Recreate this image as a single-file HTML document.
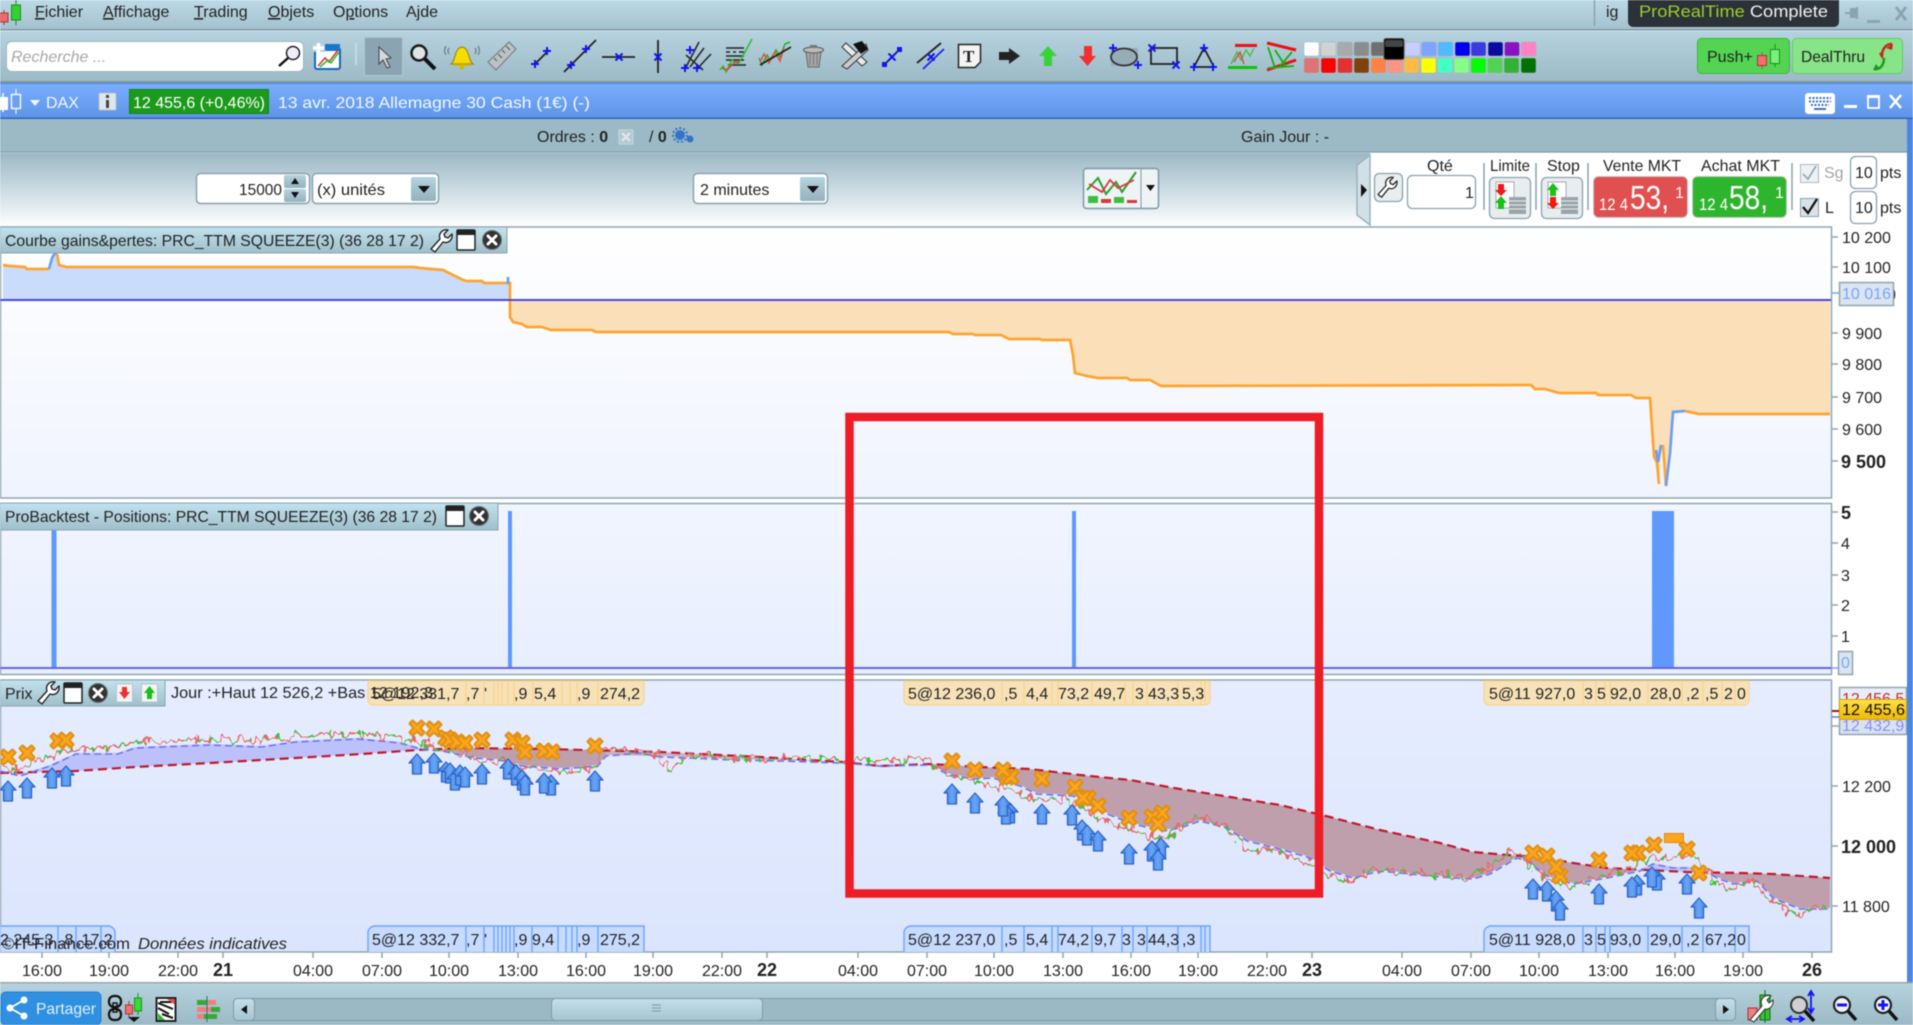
<!DOCTYPE html>
<html><head><meta charset="utf-8"><title>ProRealTime</title>
<style>
html,body{margin:0;padding:0;background:#fff;width:1913px;height:1025px;overflow:hidden}
svg{display:block;filter:blur(.6px)}
text{font-family:"Liberation Sans",sans-serif;font-size:16px;fill:#222}
.b{font-weight:bold}
.w{fill:#f2f7ff}
</style></head><body>
<svg width="1913" height="1025" viewBox="0 0 1913 1025" xmlns="http://www.w3.org/2000/svg">
<defs>
<linearGradient id="gMenu" x1="0" y1="0" x2="0" y2="1"><stop offset="0" stop-color="#bcd9e5"/><stop offset="1" stop-color="#a4c2ce"/></linearGradient>
<linearGradient id="gTool" x1="0" y1="0" x2="0" y2="1"><stop offset="0" stop-color="#b5d2de"/><stop offset="1" stop-color="#9cbac6"/></linearGradient>
<linearGradient id="gBlue" x1="0" y1="0" x2="0" y2="1"><stop offset="0" stop-color="#7baeff"/><stop offset="1" stop-color="#5d94e6"/></linearGradient>
<linearGradient id="gPanel" x1="0" y1="0" x2="0" y2="1"><stop offset="0" stop-color="#9db9c5"/><stop offset=".45" stop-color="#c6d8e0"/><stop offset="1" stop-color="#ffffff"/></linearGradient>
<linearGradient id="gTab" x1="0" y1="0" x2="0" y2="1"><stop offset="0" stop-color="#c2e2ee"/><stop offset="1" stop-color="#9fbfcb"/></linearGradient>
<linearGradient id="gC1" x1="0" y1="0" x2="0" y2="1"><stop offset="0" stop-color="#ffffff"/><stop offset="1" stop-color="#f0f4fe"/></linearGradient>
<linearGradient id="gC2" x1="0" y1="0" x2="0" y2="1"><stop offset="0" stop-color="#f1f5ff"/><stop offset="1" stop-color="#e7eefe"/></linearGradient>
<linearGradient id="gC3" x1="0" y1="0" x2="0" y2="1"><stop offset="0" stop-color="#e6edff"/><stop offset="1" stop-color="#dbe5fd"/></linearGradient>
<linearGradient id="gBtn" x1="0" y1="0" x2="0" y2="1"><stop offset="0" stop-color="#b6d3de"/><stop offset="1" stop-color="#93b2bf"/></linearGradient>
<linearGradient id="gYel" x1="0" y1="0" x2="0" y2="1"><stop offset="0" stop-color="#ffe04a"/><stop offset="1" stop-color="#f0b800"/></linearGradient>
<linearGradient id="gArr" x1="0" y1="0" x2="1" y2="0"><stop offset="0" stop-color="#3a7ee4"/><stop offset=".5" stop-color="#6aa6f6"/><stop offset="1" stop-color="#3a7ee4"/></linearGradient>
<linearGradient id="gThumb" x1="0" y1="0" x2="0" y2="1"><stop offset="0" stop-color="#c4dfe9"/><stop offset="1" stop-color="#a6c5d1"/></linearGradient>
<filter id="jit" filterUnits="userSpaceOnUse" x="0" y="700" width="1835" height="250">
<feTurbulence type="fractalNoise" baseFrequency="0.16 0.09" numOctaves="2" seed="7" result="n"/>
<feDisplacementMap in="SourceGraphic" in2="n" scale="18" xChannelSelector="G" yChannelSelector="R"/>
</filter>
<g id="x"><path d="M-4.500-7.500 0-3.500 4.500-7.500 7.500-4.500 3.500 0 7.500 4.500 4.500 7.500 0 3.500-4.500 7.500-7.500 4.500-3.500 0-7.500-4.500Z" fill="#ffa51c" stroke="#e09216" stroke-width="2.200" stroke-linejoin="round"/></g>
<g id="a"><path d="M0-10 8-1 4.500-1 4.500 10-4.500 10-4.500-1-8-1Z" fill="url(#gArr)" stroke="#2d63c4" stroke-width="1.300" stroke-linejoin="round"/></g>
<g id="cl"><circle r="9.500" fill="#333"/><circle r="9.500" fill="none" stroke="#777" stroke-width="1"/><path d="M-4-4 4 4M4-4-4 4" stroke="#fff" stroke-width="3" stroke-linecap="round"/></g>
<g id="win"><rect x="-9" y="-10" width="18" height="20" rx="1" fill="#fff" stroke="#222" stroke-width="1.500"/><rect x="-9" y="-10" width="18" height="5" fill="#222"/></g>
<path id="wr" d="M0 20 9 10C7 5 11 0 17 1L13 5 14 8 17 9 21 5C22 11 17 15 12 13L4 23Z" fill="#fff" stroke="#222" stroke-width="1.400" stroke-linejoin="round"/>
<path id="p" d="M-4 0H4M0-4V4" stroke="#1414f0" stroke-width="2" fill="none"/>
<path id="m" d="M-3.500-3.500 3.500 3.500M3.500-3.500-3.500 3.500" stroke="#1414f0" stroke-width="2" fill="none"/>
</defs>

<rect width="1913" height="1025" fill="#fff"/>

<!-- MENU -->
<rect x="0" y="0" width="1913" height="29" fill="url(#gMenu)"/>
<rect x="0" y="29" width="1913" height="1.500" fill="#7f99a5"/>
<rect x="0" y="30.500" width="1913" height="1" fill="#d5e8ef"/>
<line x1="4" y1="10" x2="4" y2="25" stroke="#a33"/><rect x="0" y="13" width="8" height="9" fill="#ee6a6a" stroke="#a33"/>
<line x1="16" y1="0" x2="16" y2="25" stroke="#1a8f1a"/><rect x="11.500" y="5" width="9" height="15" fill="#34d034" stroke="#1a8f1a"/>
<text x="35" y="17"><tspan text-decoration="underline">F</tspan>ichier</text>
<text x="103" y="17"><tspan text-decoration="underline">A</tspan>ffichage</text>
<text x="194" y="17"><tspan text-decoration="underline">T</tspan>rading</text>
<text x="268" y="17"><tspan text-decoration="underline">O</tspan>bjets</text>
<text x="333" y="17">O<tspan text-decoration="underline">p</tspan>tions</text>
<text x="406" y="17">A<tspan text-decoration="underline">j</tspan>de</text>
<line x1="1594.500" y1="0" x2="1594.500" y2="26" stroke="#8aa2ad" stroke-width="1.500"/>
<text x="1606" y="17">ig</text>
<path d="M1628 0H1839V22a5 5 0 0 1-5 5H1633a5 5 0 0 1-5-5Z" fill="#2c3239"/>
<text x="1639" y="17" textLength="189" lengthAdjust="spacingAndGlyphs" style="font-size:17px"><tspan style="fill:#9ccd2a">ProRealTime</tspan><tspan style="fill:#f2f2f2"> Complete</tspan></text>
<path d="M1845 12h5v-4h6v10h-6v-4h-5Z" fill="#8aa5b0"/><rect x="1856" y="7" width="2" height="12" fill="#8aa5b0"/>
<rect x="1867" y="20" width="13" height="3" fill="#8aa5b0"/>
<path d="M1896 7 1906 20M1906 7 1896 20" stroke="#8aa5b0" stroke-width="3"/>

<!-- TOOLBAR -->
<rect x="0" y="31.500" width="1913" height="50" fill="url(#gTool)"/>
<rect x="0" y="81" width="1913" height="2" fill="#7d97a3"/>
<rect x="6.500" y="41.500" width="297" height="30" rx="5" fill="#fff" stroke="#9fb5bf"/>
<text x="11" y="62" style="font-style:italic;fill:#a8a8a8">Recherche ...</text>
<circle cx="293" cy="53" r="6.500" fill="#eef" stroke="#222" stroke-width="1.500"/><line x1="288" y1="58" x2="279" y2="66" stroke="#111" stroke-width="2.500"/>
<g><rect x="315" y="48" width="25" height="21" rx="2" fill="#fff" stroke="#1266b8" stroke-width="2"/><rect x="315" y="44" width="25" height="7" fill="#1a76cc"/><rect x="313" y="44" width="12" height="8" fill="#b5d2de"/><path d="M313 48h11M318.500 43v10" stroke="#fff" stroke-width="3.500"/><path d="M318 66 325 58 329 62 338 50" fill="none" stroke="#e03030" stroke-width="1.500"/><path d="M320 67 328 60 331 63 339 52" fill="none" stroke="#27c027" stroke-width="1.500"/></g>
<line x1="356" y1="43" x2="356" y2="65" stroke="#c4dae3" stroke-width="2"/>
<rect x="364.500" y="37.500" width="38" height="38" fill="#8ba4b1" stroke="#aec6d0"/>
<path d="M379 47 379 64 383 60 387 68 390 67 386 59 391 58Z" fill="#cfd9de" stroke="#444"/>
<circle cx="419" cy="53" r="7.500" fill="#dfe4e8" stroke="#1a1a1a" stroke-width="2.500"/><line x1="425" y1="59" x2="435" y2="69" stroke="#111" stroke-width="4"/>
<path d="M451 64C456 61 454 48 462 47C470 48 468 61 473 64Z" fill="#f6dc00" stroke="#8a7e20"/><rect x="453" y="63" width="18" height="2.500" fill="#c9a800"/><circle cx="462" cy="67" r="2.500" fill="#d8b800"/><path d="M449 48q-2 3 0 6M446 46q-3 5 0 9M475 48q2 3 0 6M478 46q3 5 0 9" stroke="#6c8088" stroke-width="1.300" fill="none"/>
<path d="M488 62 509 42 516 49 496 70Z" fill="#bcc2c4" stroke="#777"/><path d="M494 58l3 3M498 54l4 4M502 50l3 3M506 46l4 4" stroke="#555"/>
<line x1="535" y1="64" x2="549" y2="50" stroke="#222" stroke-width="1.800"/><use href="#p" x="535" y="64"/><use href="#p" x="547" y="51"/>
<line x1="564" y1="72" x2="596" y2="40" stroke="#222" stroke-width="1.800"/><use href="#p" x="571" y="65"/><use href="#p" x="586" y="49"/>
<line x1="602" y1="57" x2="635" y2="57" stroke="#222" stroke-width="1.800"/><use href="#m" x="619" y="57"/>
<line x1="658" y1="40" x2="658" y2="73" stroke="#222" stroke-width="1.800"/><use href="#m" x="658" y="57"/>
<path d="M685 69 699 42M686 55 703 70M697 69 711 54M690 67 704 48" stroke="#2a2a2a" stroke-width="1.600" fill="none"/><use href="#p" x="690" y="50"/><use href="#p" x="685" y="68"/><use href="#p" x="697" y="68"/>
<path d="M726 48h18M726 52h4M733 52h3M739 52h5M726 56h18M726 60h18M728 65h18" stroke="#222" stroke-width="1.500" fill="none"/><path d="M720 70 723 66 726 72 732 60 738 64 745 52 752 39" stroke="#27c027" stroke-width="1.500" fill="none"/><path d="M722 68 727 70 735 62 740 62" stroke="#e04040" stroke-width="1.500" fill="none"/>
<path d="M759 58 762 65 767 55 770 60 776 50 780 57 785 44 790 42" stroke="#27b027" stroke-width="1.500" fill="none"/><path d="M760 62 764 54 769 63 775 52 780 61 784 48" stroke="#e05050" stroke-width="1.500" fill="none"/><line x1="760" y1="65" x2="791" y2="47" stroke="#222" stroke-width="1.800"/>
<path d="M806 52h15l-2 15h-11Z" fill="#a7a7a7" stroke="#666"/><ellipse cx="813.500" cy="50" rx="10" ry="3" fill="#bbb" stroke="#555"/><rect x="810" y="45" width="7" height="3" fill="#777"/><path d="M810 54v11M813.500 54v11M817 54v11" stroke="#777"/>
<path d="M841 47 861 66 866 62 845 43Z" fill="#e8eaec" stroke="#333" transform="translate(1 0)"/><path d="M866 44 842 66 847 69 868 50Z" fill="#ccc" stroke="#333"/><path d="M853 44 862 41 868 49 861 54Z" fill="#111"/>
<line x1="884" y1="65" x2="900" y2="49" stroke="#222" stroke-width="1.800"/><rect x="882" y="62" width="5" height="5" fill="#1414f0"/><rect x="897" y="47" width="5" height="5" fill="#1414f0"/><use href="#m" x="892" y="57"/>
<path d="M917 63 941 43" stroke="#222" stroke-width="1.800"/><path d="M923 69 944 49" stroke="#2222f0" stroke-width="1.800"/><use href="#m" x="931" y="57"/>
<path d="M958.500 44.500H980.500V62L975 67.500H958.500Z" fill="#f4f4f4" stroke="#222" stroke-width="1.500"/><text x="963" y="62" style="font-family:'Liberation Serif',serif;font-size:17px;font-weight:bold">T</text>
<path d="M999 52H1009V48L1020 56 1009 64V60H999Z" fill="#222"/>
<path d="M1048 46 1057 56H1052V66H1044V56H1039Z" fill="#36d436"/>
<path d="M1084 46H1092V56H1096L1087.500 66 1079 56H1084Z" fill="#f23030"/>
<rect x="1111" y="48" width="27" height="18" fill="#96adb8"/><ellipse cx="1124" cy="57" rx="13" ry="8.500" fill="none" stroke="#333" stroke-width="1.800"/><use href="#p" x="1113" y="48"/><use href="#p" x="1138" y="65"/>
<rect x="1151" y="48" width="26" height="16" fill="none" stroke="#222" stroke-width="1.800"/><use href="#m" x="1152" y="48"/><use href="#m" x="1176" y="65"/>
<path d="M1204 48 1194 67H1214Z" fill="none" stroke="#222" stroke-width="1.800"/><use href="#p" x="1204" y="48"/><use href="#p" x="1194" y="67"/><use href="#p" x="1213" y="67"/>
<rect x="1235" y="44" width="22" height="3" fill="#f01010"/><rect x="1228" y="66" width="29" height="3" fill="#10c010"/><path d="M1231 64 1237 52 1241 60 1246 50 1250 56 1254 48" fill="none" stroke="#3cc03c" stroke-width="1.300"/><path d="M1234 62 1240 52 1244 64" fill="none" stroke="#e04040" stroke-width="1.300"/>
<path d="M1267 43 1296 50M1267 70 1296 60" stroke="#ef1010" stroke-width="3"/><path d="M1268 68 1294 66M1268 47 1275 68M1275 50 1286 67M1292 52 1280 66" stroke="#12b012" stroke-width="1.800" fill="none"/>
<!-- swatches -->
<g stroke="#9db3bd" stroke-width=".5">
<rect x="1304" y="42" width="15" height="14" rx="2" fill="#fff"/><rect x="1321" y="42" width="15" height="14" rx="2" fill="#d2d2d2"/><rect x="1337.500" y="42" width="15" height="14" rx="2" fill="#a9a9a9"/><rect x="1354" y="42" width="15" height="14" rx="2" fill="#8c8c8c"/><rect x="1371" y="42" width="15" height="14" rx="2" fill="#707070"/>
<rect x="1405" y="42" width="15" height="14" rx="2" fill="#c6ceff"/><rect x="1421.500" y="42" width="15" height="14" rx="2" fill="#7ea4ff"/><rect x="1438" y="42" width="15" height="14" rx="2" fill="#4fbaff"/><rect x="1455" y="42" width="15" height="14" rx="2" fill="#0000ee"/><rect x="1471" y="42" width="15" height="14" rx="2" fill="#3a3ae0"/><rect x="1488" y="42" width="15" height="14" rx="2" fill="#0a0aa0"/><rect x="1504.500" y="42" width="15" height="14" rx="2" fill="#8a12c2"/><rect x="1521" y="42" width="15" height="14" rx="2" fill="#ff82c4"/>
<rect x="1304" y="58" width="15" height="15" rx="2" fill="#e27272"/><rect x="1321" y="58" width="15" height="15" rx="2" fill="#ff0000"/><rect x="1337.500" y="58" width="15" height="15" rx="2" fill="#e33232"/><rect x="1354" y="58" width="15" height="15" rx="2" fill="#80420c"/><rect x="1371" y="58" width="15" height="15" rx="2" fill="#ff8244"/><rect x="1387.500" y="58" width="15" height="15" rx="2" fill="#ff9484"/><rect x="1404" y="58" width="15" height="15" rx="2" fill="#ffba44"/><rect x="1421" y="58" width="15" height="15" rx="2" fill="#ffff00"/><rect x="1437.500" y="58" width="15" height="15" rx="2" fill="#44ffc4"/><rect x="1454" y="58" width="15" height="15" rx="2" fill="#84ff84"/><rect x="1471" y="58" width="15" height="15" rx="2" fill="#00ff00"/><rect x="1487.500" y="58" width="15" height="15" rx="2" fill="#52d252"/><rect x="1504" y="58" width="15" height="15" rx="2" fill="#32b232"/><rect x="1521" y="58" width="15" height="15" rx="2" fill="#007200"/>
</g>
<rect x="1384" y="38.500" width="20" height="21" rx="2" fill="#000" stroke="#555"/><rect x="1385" y="40" width="18" height="7" rx="2" fill="#444"/>
<!-- push -->
<rect x="1697.500" y="38.500" width="92" height="35" rx="4" fill="#53d553" stroke="#3cb43c"/>
<text x="1707" y="62">Push+</text>
<line x1="1762" y1="52" x2="1762" y2="69" stroke="#c43"/><rect x="1757.500" y="55.500" width="9" height="10" fill="#f07070" stroke="#a33"/>
<line x1="1775" y1="44" x2="1775" y2="67" stroke="#1a901a"/><rect x="1770.500" y="49.500" width="9" height="14" fill="#7aef7a" stroke="#1a901a"/>
<rect x="1792.500" y="38.500" width="110" height="35" rx="4" fill="#87e487" stroke="#63cc63"/>
<text x="1801" y="62" textLength="64" lengthAdjust="spacingAndGlyphs">DealThru</text>
<path d="M1892 44C1885 44 1882 50 1882 56L1880 53" fill="none" stroke="#d02020" stroke-width="2.500"/><path d="M1886 48 1893 44 1892 50Z" fill="#d02020"/><path d="M1874 69C1881 70 1884 64 1884 58" fill="none" stroke="#1f9a1f" stroke-width="2.500"/><path d="M1880 69 1873 70 1876 64Z" fill="#1f9a1f"/>

<!-- BLUE BAR -->
<rect x="0" y="83" width="1913" height="36" fill="url(#gBlue)"/>
<rect x="0" y="83" width="1913" height="1" fill="#4c86dd"/>
<rect x="0" y="117.500" width="1913" height="1.500" fill="#2f63c2"/>
<rect x="0" y="97" width="8" height="13" fill="#fff"/><line x1="3" y1="93" x2="3" y2="112" stroke="#fff" stroke-width="1.500"/>
<line x1="16" y1="89" x2="16" y2="114" stroke="#fff"/><rect x="11.500" y="94.500" width="9" height="14" fill="#6ea0f2" stroke="#fff" stroke-width="1.300"/>
<path d="M30 100H40L35 106Z" fill="#eef5ff"/>
<text x="46" y="108" class="w">DAX</text>
<rect x="99" y="93" width="17" height="17" rx="1" fill="#dfe7ee" stroke="#bbb"/><rect x="106" y="95" width="3" height="3" fill="#444"/><rect x="106" y="100" width="3" height="8" fill="#444"/>
<rect x="129.500" y="89.500" width="139" height="24" fill="#1c9a1c" stroke="#0d8a0d"/>
<text x="133" y="108" textLength="132" lengthAdjust="spacingAndGlyphs" style="fill:#fff">12 455,6 (+0,46%)</text>
<text x="278" y="108" textLength="312" lengthAdjust="spacingAndGlyphs" class="w">13 avr. 2018 Allemagne 30 Cash (1€) (-)</text>
<rect x="1805" y="93" width="30" height="21" rx="3" fill="#fff"/><path d="M1809 98h22M1809 101.500h22M1811 105h18" stroke="#3d70bf" stroke-width="2" stroke-dasharray="2 1.500"/><rect x="1814" y="108" width="12" height="2" fill="#3d70bf"/>
<rect x="1844" y="105" width="13" height="3" fill="#fff"/>
<rect x="1868" y="96" width="11" height="12" fill="none" stroke="#fff" stroke-width="1.800"/><rect x="1867" y="95" width="13" height="3" fill="#fff"/>
<path d="M1890 95 1901 108M1901 95 1890 108" stroke="#fff" stroke-width="2.500"/>

<!-- ORDERS BAR -->
<rect x="0" y="119" width="1913" height="33" fill="#9cbac6"/>
<rect x="0" y="151.500" width="1913" height="1" fill="#7b96a2"/>
<rect x="0" y="152.500" width="1913" height="1" fill="#dbe9ee"/>
<text x="537" y="142">Ordres : <tspan class="b" style="font-weight:bold">0</tspan></text>
<rect x="619" y="130" width="14" height="14" fill="#b5c9d2" stroke="#c5d6dd"/><path d="M622 133l8 8M630 133l-8 8" stroke="#dfe9ed" stroke-width="2"/>
<text x="649" y="142">/ <tspan style="font-weight:bold">0</tspan></text>
<circle cx="680" cy="135" r="5" fill="#3673c8"/><circle cx="680" cy="135" r="7" fill="none" stroke="#3673c8" stroke-width="2" stroke-dasharray="2 2"/><circle cx="690" cy="139" r="3.500" fill="#3673c8"/>
<text x="1241" y="142">Gain Jour :  -</text>

<!-- CONTROL PANEL -->
<rect x="0" y="153" width="1370" height="74" fill="url(#gPanel)"/>
<rect x="1370" y="153" width="543" height="74" fill="#fff"/>
<path d="M1370 155 1357 165V215L1370 225Z" fill="#d2e0e6" stroke="#9ab2bd" stroke-width="1.500"/><path d="M1361 184 1367 190 1361 197Z" fill="#111"/>
<rect x="196.500" y="173.500" width="113" height="30" rx="4" fill="#fff" stroke="#8aa2ad" stroke-width="1.500"/>
<text x="239" y="195" textLength="43" lengthAdjust="spacingAndGlyphs">15000</text>
<rect x="284" y="175" width="22" height="13" rx="2" fill="url(#gBtn)"/><rect x="284" y="189" width="22" height="13" rx="2" fill="url(#gBtn)"/>
<path d="M295 178 299 184H291Z" fill="#111"/><path d="M291 192H299L295 198Z" fill="#111"/>
<rect x="312.500" y="173.500" width="126" height="30" rx="4" fill="#fff" stroke="#8aa2ad" stroke-width="1.500"/>
<text x="317" y="195" textLength="68" lengthAdjust="spacingAndGlyphs">(x) unités</text>
<rect x="411" y="177" width="25" height="24" rx="2" fill="url(#gBtn)"/><path d="M418 186H430L424 193Z" fill="#111"/>
<rect x="693.500" y="173.500" width="134" height="30" rx="4" fill="#fff" stroke="#8aa2ad" stroke-width="1.500"/>
<text x="700" y="195">2 minutes</text>
<rect x="800" y="177" width="25" height="24" rx="2" fill="url(#gBtn)"/><path d="M807 186H819L813 193Z" fill="#111"/>
<rect x="1083.500" y="168.500" width="75" height="40" rx="3" fill="#eef3f6" stroke="#7f98a3" stroke-width="1.500"/><line x1="1141" y1="169" x2="1141" y2="208" stroke="#7f98a3"/>
<path d="M1146 185H1155L1150.500 191Z" fill="#111"/>
<path d="M1087 190 1098 178 1106 194 1116 182 1122 192 1136 172" fill="none" stroke="#2f9f2f" stroke-width="2"/><path d="M1089 184 1102 192 1110 180 1118 188 1134 180" fill="none" stroke="#d53b3b" stroke-width="1.800"/>
<rect x="1088" y="196" width="10" height="7" fill="#3cc03c"/><rect x="1101" y="199" width="10" height="4" fill="#d53b3b"/><rect x="1114" y="197" width="10" height="6" fill="#3cc03c"/><rect x="1127" y="200" width="10" height="3" fill="#d53b3b"/>

<!-- order ticket -->
<rect x="1374.500" y="173.500" width="28" height="28" rx="5" fill="#e9eef1" stroke="#8aa2ad" stroke-width="1.300"/>
<use href="#wr" transform="translate(1378 176.500) scale(.9)"/>
<text x="1427" y="171">Qté</text>
<rect x="1407.500" y="175.500" width="68" height="33" rx="5" fill="#fff" stroke="#8aa2ad" stroke-width="1.300"/>
<text x="1465" y="198">1</text>
<line x1="1484" y1="163" x2="1484" y2="210" stroke="#8aa2ad" stroke-width="1.500"/>
<text x="1490" y="171" textLength="40" lengthAdjust="spacingAndGlyphs">Limite</text>
<rect x="1489.500" y="177.500" width="41" height="41" rx="5" fill="#e8edf0" stroke="#8aa2ad" stroke-width="1.300"/>
<rect x="1496" y="182" width="18" height="26" fill="#fff" stroke="#aaa"/>
<path d="M1498 184H1504V190H1507L1501 196 1495 190H1498Z" fill="#f01818"/><path d="M1501 196 1507 203H1504V209H1498V203H1495Z" fill="#18c018"/>
<rect x="1509" y="197" width="17" height="17" fill="#9aa5aa"/><path d="M1509 201h17M1509 205h17M1509 209h17" stroke="#e8edf0"/>
<line x1="1536" y1="163" x2="1536" y2="210" stroke="#8aa2ad" stroke-width="1.500"/>
<text x="1547" y="171">Stop</text>
<rect x="1541.500" y="177.500" width="41" height="41" rx="5" fill="#e8edf0" stroke="#8aa2ad" stroke-width="1.300"/>
<rect x="1548" y="182" width="18" height="26" fill="#fff" stroke="#aaa"/>
<path d="M1553 183 1559 190H1556V196H1550V190H1547Z" fill="#18c018"/><path d="M1550 197H1556V203H1559L1553 209 1547 203H1550Z" fill="#f01818"/>
<rect x="1561" y="197" width="17" height="17" fill="#9aa5aa"/><path d="M1561 201h17M1561 205h17M1561 209h17" stroke="#e8edf0"/>
<line x1="1588" y1="163" x2="1588" y2="210" stroke="#8aa2ad" stroke-width="1.500"/>
<text x="1603" y="171" textLength="78" lengthAdjust="spacingAndGlyphs">Vente MKT</text>
<rect x="1593.500" y="176.500" width="94" height="41" rx="5" fill="#e05050" stroke="#c9c9c9"/>
<text x="1599" y="210" textLength="29" lengthAdjust="spacingAndGlyphs" style="font-size:17px;fill:#fff">12 4</text>
<text x="1630" y="209" textLength="39" lengthAdjust="spacingAndGlyphs" style="font-size:33px;fill:#fff">53,</text>
<text x="1675" y="198" style="fill:#fff">1</text>
<text x="1701" y="171" textLength="79" lengthAdjust="spacingAndGlyphs">Achat MKT</text>
<rect x="1692.500" y="176.500" width="94" height="41" rx="5" fill="#2eb52e" stroke="#c9c9c9"/>
<text x="1699" y="210" textLength="29" lengthAdjust="spacingAndGlyphs" style="font-size:17px;fill:#fff">12 4</text>
<text x="1729" y="209" textLength="39" lengthAdjust="spacingAndGlyphs" style="font-size:33px;fill:#fff">58,</text>
<text x="1775" y="198" style="fill:#fff">1</text>
<line x1="1792" y1="163" x2="1792" y2="210" stroke="#8aa2ad" stroke-width="1.500"/>
<rect x="1800.500" y="164.500" width="18" height="18" fill="#eef2f4" stroke="#a9b8bf"/><path d="M1803 174 1808 179 1816 166" fill="none" stroke="#9aaab2" stroke-width="1.800"/>
<text x="1824" y="178" style="fill:#a5a5a5">Sg</text>
<rect x="1800.500" y="198.500" width="18" height="18" fill="#d9e2e6" stroke="#8aa2ad"/><path d="M1803 207 1808 213 1817 199" fill="none" stroke="#111" stroke-width="2.200"/>
<text x="1825" y="213">L</text>
<rect x="1850.500" y="156.500" width="26" height="32" rx="5" fill="#fff" stroke="#8aa2ad" stroke-width="1.300"/><text x="1855" y="178">10</text><text x="1880" y="178">pts</text>
<rect x="1850.500" y="191.500" width="26" height="32" rx="5" fill="#fff" stroke="#8aa2ad" stroke-width="1.300"/><text x="1855" y="213">10</text><text x="1880" y="213">pts</text>

<!-- CHART 1 -->
<rect x="0.500" y="227" width="1831" height="271" fill="url(#gC1)" stroke="#8fa6b0" stroke-width="1.500"/>
<path d="M3 265 10 266 25 267 27 269 49 269 52 258 55 254 57 254 59 265 67 267 414 267 420 268 443 270 463 280 467 281 482 281 484 283 510 283 510 300 3 300Z" fill="#c9dcfb"/>
<path d="M510 300 510 317 513 322 522 324 527 327 542 327 551 330 592 330 596 332 949 332 953 334 973 334 975 335 1001 335 1009 339 1040 339 1042 340 1070 340 1073 355 1075 373 1087 376 1098 378 1127 378 1130 380 1150 380 1161 386 1531 385 1535 389 1545 389 1559 393 1596 393 1598 395 1631 395 1636 398 1650 398 1654 457 1659 484 1662 445 1666 486 1670 453 1673 412 1685 411 1699 414 1830 414 1830 300Z" fill="#fbdfb9"/>
<path d="M3 265 10 266 25 267 27 269 49 269M57 254 59 265 67 267 414 267 420 268 443 270 463 280 467 281 482 281 484 283 508 283 510 283 510 317 513 322 522 324 527 327 542 327 551 330 592 330 596 332 949 332 953 334 973 334 975 335 1001 335 1009 339 1040 339 1042 340 1070 340 1073 355 1075 373 1087 376 1098 378 1127 378 1130 380 1150 380 1161 386 1531 385 1535 389 1545 389 1559 393 1596 393 1598 395 1631 395 1636 398 1650 398 1654 457 1657 462 1659 484M1663 445 1666 486M1685 411 1699 414 1830 414" fill="none" stroke="#ffa42e" stroke-width="2.700"/>
<path d="M49 269 52 258 55 253 57 253M508 277V284M1656 450 1658 462 1661 445M1666 486 1670 453 1673 412 1685 411" fill="none" stroke="#6c9ff2" stroke-width="2.700"/>
<line x1="0" y1="300" x2="1831" y2="300" stroke="#4646e2" stroke-width="2"/>
<line x1="1831" y1="293" x2="1840" y2="293" stroke="#79a5f5" stroke-width="1.500"/>
<rect x="0" y="227" width="507" height="26" fill="url(#gTab)" stroke="#8aa4af"/>
<text x="5" y="246" textLength="419" lengthAdjust="spacingAndGlyphs">Courbe gains&amp;pertes: PRC_TTM SQUEEZE(3) (36 28 17 2)</text>
<use href="#wr" transform="translate(431 229)"/><use href="#win" x="466" y="240"/><use href="#cl" x="492" y="240"/>
<g stroke="#8fa6b0" stroke-width="1.500"><path d="M1832 237h6M1832 267h6M1832 333h6M1832 364h6M1832 397h6M1832 429h6M1832 461h6"/></g>
<text x="1842" y="243">10 200</text><text x="1842" y="273">10 100</text>
<text x="1886" y="301" style="font-size:18px;font-weight:bold;fill:#111">0</text>
<rect x="1839.500" y="282.500" width="54" height="23" fill="#dbe4f2" stroke="#8fa6b0" stroke-width="1.500"/>
<text x="1842" y="299" textLength="49" lengthAdjust="spacingAndGlyphs" style="fill:#79a5f5">10 016</text>
<text x="1842" y="339">9 900</text><text x="1842" y="370">9 800</text><text x="1842" y="403">9 700</text><text x="1842" y="435">9 600</text>
<text x="1841" y="468" style="font-size:18px;font-weight:bold;fill:#222">9 500</text>

<!-- CHART 2 -->
<rect x="0.500" y="503.500" width="1831" height="171" fill="url(#gC2)" stroke="#8fa6b0" stroke-width="1.500"/>
<g fill="#5f99ff"><rect x="51.500" y="511" width="5" height="157"/><rect x="508" y="511" width="4" height="157"/><rect x="1072" y="511" width="4" height="157"/><rect x="1652" y="511" width="22" height="157"/></g>
<line x1="0" y1="668" x2="1831" y2="668" stroke="#6363e6" stroke-width="2"/>
<line x1="1831" y1="668" x2="1840" y2="668" stroke="#79a5f5" stroke-width="1.500"/>
<rect x="0" y="503" width="498" height="27" fill="url(#gTab)" stroke="#8aa4af"/>
<text x="5" y="522" textLength="432" lengthAdjust="spacingAndGlyphs">ProBacktest - Positions: PRC_TTM SQUEEZE(3) (36 28 17 2)</text>
<use href="#win" x="455" y="516"/><use href="#cl" x="479" y="516"/>
<g stroke="#8fa6b0" stroke-width="1.500"><path d="M1832 512h6M1832 543h6M1832 575h6M1832 605h6M1832 636h6"/></g>
<text x="1841" y="519" style="font-size:18px;font-weight:bold;fill:#222">5</text><text x="1841" y="549">4</text><text x="1841" y="581">3</text><text x="1841" y="611">2</text><text x="1841" y="642">1</text>
<rect x="1838.500" y="651.500" width="14" height="23" fill="#dbe4f2" stroke="#8fa6b0" stroke-width="1.500"/><text x="1841" y="668" style="fill:#79a5f5">0</text>

<!-- CHART 3 -->
<rect x="0.500" y="680" width="1831" height="272" fill="url(#gC3)" stroke="#8fa6b0" stroke-width="1.500"/>
<!-- cloud -->
<path d="M0 770 20 775 50 765 76 753 118 753 135 747 210 744 261 746 295 741 358 738 400 742 421 748 428 750 417 750 362 754 295 758 210 763 135 767 76 771 0 773Z" fill="#bdc1fb"/>
<path d="M428 750 463 748 547 749 606 750 606 755 598 765 560 768 522 765 505 760 476 757 442 750Z" fill="#bf9fab"/>
<path d="M606 750 660 752 760 757 842 762 880 766 880 767 842 762 781 760 732 759 690 757 660 756 606 755Z" fill="#c6b2c4"/>
<path d="M930 764 980 767 1030 769 1080 775 1130 780 1180 789 1230 797 1280 805 1330 817 1380 830 1440 843 1473 852 1507 855 1540 857 1573 863 1607 868 1640 870 1607 877 1573 883 1550 877 1527 860 1517 857 1490 873 1473 878 1440 876 1380 870 1353 877 1330 870 1310 857 1280 848 1247 840 1227 827 1200 820 1180 827 1163 830 1133 823 1107 813 1073 795 1037 793 1020 785 993 777 973 778 947 773Z" fill="#bf9fab"/>
<path d="M1640 870 1653 863 1673 867 1700 867 1708 873 1687 872 1647 870Z" fill="#bdc1fb"/>
<path d="M1708 873 1740 873 1773 874 1830 878 1830 908 1800 908 1773 897 1757 880 1733 883 1717 877Z" fill="#bf9fab"/>
<!-- lines -->
<path d="M0 773 76 771 135 767 210 763 295 758 362 754 417 750 463 748 547 749 660 752 760 757 842 762 880 766 930 764 980 767 1030 769 1080 775 1130 780 1180 789 1230 797 1280 805 1330 817 1380 830 1440 843 1473 852 1507 855 1540 857 1573 863 1607 868 1647 870 1687 872 1740 873 1773 874 1830 878" fill="none" stroke="#c01828" stroke-width="2.200" stroke-dasharray="9 5"/>
<path d="M0 771 20 776 50 766 76 754 118 754 135 748 210 745 261 747 295 742 358 739 400 743 421 749 442 751 476 758 505 761 522 766 560 769 598 766 606 756 640 753 660 757 690 758 732 760 781 761 842 763 880 766 930 765 947 774 973 779 993 778 1020 786 1037 794 1073 796 1107 814 1133 824 1163 831 1180 828 1200 821 1227 828 1247 841 1280 849 1310 858 1330 871 1353 878 1380 871 1440 877 1473 879 1490 874 1517 858 1527 861 1550 878 1573 884 1607 878 1640 871 1653 864 1673 868 1700 868 1717 878 1733 884 1757 881 1773 898 1800 909 1830 909" fill="none" stroke="#6f72f5" stroke-width="1.600" stroke-dasharray="7 4"/>
<g filter="url(#jit)" fill="none" stroke-width="2.100">
<path d="M-4 764 16 770 46 758 72 749 114 748 131 742 206 739 257 741 291 736 354 733 396 737 417 743 438 746 472 759 501 760 518 768 556 770 594 768 602 750 636 750 656 754 668 772 680 760 690 756 728 757 777 758 838 760 876 761 926 759 943 772 969 782 989 784 1016 792 1033 800 1069 799 1103 820 1129 830 1159 838 1176 832 1196 816 1223 826 1243 846 1276 852 1306 862 1326 874 1349 882 1376 868 1436 875 1469 878 1486 868 1513 851 1523 856 1546 880 1569 888 1603 876 1636 866 1649 858 1669 860 1696 856 1713 880 1729 890 1753 880 1769 900 1796 914 1826 905" stroke="#e86868"/>
<path d="M-4 764 16 770 46 758 72 749 114 748 131 742 206 739 257 741 291 736 354 733 396 737 417 743 438 746 472 759 501 760 518 768 556 770 594 768 602 750 636 750 656 754 668 772 680 760 690 756 728 757 777 758 838 760 876 761 926 759 943 772 969 782 989 784 1016 792 1033 800 1069 799 1103 820 1129 830 1159 838 1176 832 1196 816 1223 826 1243 846 1276 852 1306 862 1326 874 1349 882 1376 868 1436 875 1469 878 1486 868 1513 851 1523 856 1546 880 1569 888 1603 876 1636 866 1649 858 1669 860 1696 856 1713 880 1729 890 1753 880 1769 900 1796 914 1826 905" stroke="#36c836" stroke-dasharray="5 11"/>
</g>
<!-- X markers -->
<g>
<use href="#x" x="8" y="757"/><use href="#x" x="27" y="753"/><use href="#x" x="58" y="741"/><use href="#x" x="66" y="740"/><use href="#x" x="417" y="728"/><use href="#x" x="434" y="729"/><use href="#x" x="446" y="738"/><use href="#x" x="450" y="740"/><use href="#x" x="457" y="742"/><use href="#x" x="465" y="743"/><use href="#x" x="482" y="740"/><use href="#x" x="513" y="740"/><use href="#x" x="522" y="743"/><use href="#x" x="525" y="752"/><use href="#x" x="544" y="751"/><use href="#x" x="552" y="752"/><use href="#x" x="595" y="746"/>
<use href="#x" x="952" y="761"/><use href="#x" x="975" y="770"/><use href="#x" x="1007" y="777"/><use href="#x" x="1011" y="777"/><use href="#x" x="1003" y="770"/><use href="#x" x="1042" y="779"/><use href="#x" x="1075" y="787"/><use href="#x" x="1088" y="798"/><use href="#x" x="1083" y="798"/><use href="#x" x="1098" y="806"/><use href="#x" x="1129" y="818"/><use href="#x" x="1162" y="813"/><use href="#x" x="1152" y="817"/><use href="#x" x="1158" y="824"/>
<use href="#x" x="1533" y="853"/><use href="#x" x="1547" y="856"/><use href="#x" x="1560" y="876"/><use href="#x" x="1556" y="867"/><use href="#x" x="1599" y="860"/><use href="#x" x="1638" y="853"/><use href="#x" x="1632" y="853"/><use href="#x" x="1654" y="845"/><use href="#x" x="1687" y="849"/><use href="#x" x="1699" y="873"/>
</g>
<rect x="1664.500" y="833.500" width="19" height="9" fill="#ffa51c" stroke="#d98a10"/>
<!-- arrows -->
<g>
<use href="#a" x="8" y="791"/><use href="#a" x="27" y="788"/><use href="#a" x="52" y="778"/><use href="#a" x="66" y="776"/><use href="#a" x="417" y="764"/><use href="#a" x="434" y="763"/><use href="#a" x="446" y="772"/><use href="#a" x="450" y="773"/><use href="#a" x="455" y="780"/><use href="#a" x="460" y="775"/><use href="#a" x="465" y="777"/><use href="#a" x="482" y="774"/><use href="#a" x="508" y="769"/><use href="#a" x="516" y="775"/><use href="#a" x="522" y="780"/><use href="#a" x="525" y="785"/><use href="#a" x="551" y="785"/><use href="#a" x="544" y="783"/><use href="#a" x="595" y="781"/>
<use href="#a" x="952" y="794"/><use href="#a" x="975" y="803"/><use href="#a" x="1010" y="813"/><use href="#a" x="1006" y="814"/><use href="#a" x="1003" y="806"/><use href="#a" x="1042" y="814"/><use href="#a" x="1072" y="815"/><use href="#a" x="1082" y="830"/><use href="#a" x="1087" y="835"/><use href="#a" x="1098" y="841"/><use href="#a" x="1129" y="854"/><use href="#a" x="1161" y="848"/><use href="#a" x="1152" y="851"/><use href="#a" x="1158" y="860"/>
<use href="#a" x="1533" y="889"/><use href="#a" x="1547" y="891"/><use href="#a" x="1556" y="901"/><use href="#a" x="1560" y="910"/><use href="#a" x="1599" y="894"/><use href="#a" x="1637" y="885"/><use href="#a" x="1632" y="887"/><use href="#a" x="1657" y="880"/><use href="#a" x="1652" y="877"/><use href="#a" x="1687" y="884"/><use href="#a" x="1699" y="908"/>
</g>
<!-- top orange tags -->
<g fill="#f7e2b8" stroke="#f9d48a" stroke-width="1.200">
<path d="M368 681H644V700a5 5 0 0 1-5 5H373a5 5 0 0 1-5-5Z"/>
<path d="M466 681V705M484 681V705M494 681V705M498 681V705M502 681V705M508 681V705M514 681V705M533 681V705M562 681V705M570 681V705M577 681V705M598 681V705" fill="none"/>
<path d="M904 681H1210V700a5 5 0 0 1-5 5H909a5 5 0 0 1-5-5Z"/>
<path d="M1002 681V705M1024 681V705M1052 681V705M1058 681V705M1092 681V705M1125 681V705M1133 681V705M1147 681V705M1178 681V705M1201 681V705M1205 681V705" fill="none"/>
<path d="M1484 681H1749V700a5 5 0 0 1-5 5H1489a5 5 0 0 1-5-5Z"/>
<path d="M1583 681V705M1596 681V705M1605 681V705M1610 681V705M1648 681V705M1682 681V705M1703 681V705M1722 681V705M1735 681V705" fill="none"/>
</g>
<!-- bottom blue tags -->
<g fill="#c6dbff" stroke="#6da4ff" stroke-width="1.400">
<path d="M0 952V926H108a7 7 0 0 1 7 7V952"/>
<path d="M58 926V952M76 926V952M101 926V952" fill="none"/>
<path d="M368 952V933a7 7 0 0 1 7-7H644V952"/>
<path d="M466 926V952M484 926V952M494 926V952M498 926V952M502 926V952M506 926V952M510 926V952M514 926V952M532 926V952M558 926V952M566 926V952M572 926V952M577 926V952M598 926V952" fill="none"/>
<path d="M904 952V933a7 7 0 0 1 7-7H1210V952"/>
<path d="M1002 926V952M1024 926V952M1052 926V952M1058 926V952M1092 926V952M1122 926V952M1133 926V952M1147 926V952M1178 926V952M1201 926V952M1205 926V952" fill="none"/>
<path d="M1484 952V933a7 7 0 0 1 7-7H1749V952"/>
<path d="M1583 926V952M1596 926V952M1605 926V952M1610 926V952M1648 926V952M1682 926V952M1703 926V952M1735 926V952" fill="none"/>
</g>
<!-- Tab -->
<rect x="0" y="680" width="165" height="26" fill="url(#gTab)" stroke="#8aa4af"/>
<text x="5" y="699">Prix</text>
<use href="#wr" transform="translate(38 681)"/><use href="#win" x="73" y="693"/><use href="#cl" x="98" y="693"/>
<rect x="116.500" y="684" width="16" height="18" fill="#f2f4f6" stroke="#b6c4cb"/><path d="M122 687H127V692H130L124.500 699 119 692H122Z" fill="#f03030"/>
<rect x="141.500" y="684" width="16" height="18" fill="#f2f4f6" stroke="#b6c4cb"/><path d="M149.500 686 155 693H152V699H147V693H144Z" fill="#18c018"/>
<!-- tag texts -->
<text x="171" y="698" textLength="262" lengthAdjust="spacingAndGlyphs">Jour :+Haut 12 526,2 +Bas 12 192,3</text>
<text x="372" y="699">5@12 331,7</text><text x="466" y="699">,7</text><text x="484" y="699">'</text><text x="514" y="699">,9</text><text x="534" y="699">5,4</text><text x="577" y="699">,9</text><text x="600" y="699">274,2</text>
<text x="908" y="699">5@12 236,0</text><text x="1004" y="699">,5</text><text x="1026" y="699">4,4</text><text x="1058" y="699">73,2</text><text x="1094" y="699">49,7</text><text x="1135" y="699">3</text><text x="1148" y="699">43,3</text><text x="1182" y="699">5,3</text>
<text x="1489" y="699">5@11 927,0</text><text x="1584" y="699">3</text><text x="1597" y="699">5</text><text x="1610" y="699">92,0</text><text x="1650" y="699">28,0</text><text x="1686" y="699">,2</text><text x="1705" y="699">,5</text><text x="1724" y="699">2</text><text x="1737" y="699">0</text>
<text x="372" y="945">5@12 332,7</text><text x="466" y="945">,7</text><text x="484" y="945">'</text><text x="514" y="945">,9</text><text x="532" y="945">9,4</text><text x="577" y="945">,9</text><text x="600" y="945">275,2</text>
<text x="908" y="945">5@12 237,0</text><text x="1004" y="945">,5</text><text x="1026" y="945">5,4</text><text x="1058" y="945">74,2</text><text x="1094" y="945">9,7</text><text x="1122" y="945">3</text><text x="1137" y="945">3</text><text x="1148" y="945">44,3</text><text x="1182" y="945">,3</text>
<text x="1489" y="945">5@11 928,0</text><text x="1584" y="945">3</text><text x="1597" y="945">5</text><text x="1610" y="945">93,0</text><text x="1650" y="945">29,0</text><text x="1686" y="945">,2</text><text x="1705" y="945">67,2</text><text x="1737" y="945">0</text>
<text x="0" y="945">2 245,3</text><text x="60" y="945">,8</text><text x="77" y="945">,1</text><text x="86" y="945">,7,2</text>
<text x="2" y="949" textLength="128" lengthAdjust="spacingAndGlyphs">©IT-Finance.com</text>
<text x="138" y="949" textLength="149" lengthAdjust="spacingAndGlyphs" style="font-style:italic">Données indicatives</text>
<!-- price axis -->
<g stroke="#8fa6b0" stroke-width="1.500"><path d="M1832 786h6M1832 846h6M1832 906h6"/></g>
<text x="1842" y="792">12 200</text>
<text x="1841" y="853" style="font-size:18px;font-weight:bold;fill:#222">12 000</text>
<text x="1842" y="912">11 800</text>
<rect x="1839.500" y="687.500" width="67" height="28" fill="#e8eef8" stroke="#8fa6b0" stroke-width="1.500"/>
<text x="1842" y="704" style="fill:#c03030">12 456,5</text>
<rect x="1839.500" y="716.500" width="67" height="18" fill="#d8e2f3" stroke="#8fa6b0" stroke-width="1.500"/>
<text x="1842" y="731" style="fill:#8c8cf2">12 432,9</text>
<path d="M1832 711h7" stroke="#a01818" stroke-width="2"/><path d="M1832 717h7" stroke="#6f72f5" stroke-width="1.500"/><path d="M1832 726h7" stroke="#8fa6b0" stroke-width="1.500"/>
<rect x="1839.500" y="699.500" width="67" height="20" fill="url(#gYel)" stroke="#d4a600"/>
<text x="1842" y="715" textLength="63" lengthAdjust="spacingAndGlyphs" style="fill:#111">12 455,6</text>

<!-- time axis -->
<g stroke="#8fa6b0" stroke-width="1.500"><path d="M42 952v6M109 952v6M178 952v6M223 952v6M313 952v6M382 952v6M449 952v6M518 952v6M586 952v6M653 952v6M722 952v6M767 952v6M858 952v6M927 952v6M994 952v6M1063 952v6M1131 952v6M1198 952v6M1267 952v6M1312 952v6M1402 952v6M1471 952v6M1539 952v6M1608 952v6M1675 952v6M1743 952v6M1812 952v6"/></g>
<g text-anchor="middle">
<text x="42" y="976">16:00</text><text x="109" y="976">19:00</text><text x="178" y="976">22:00</text>
<text x="313" y="976">04:00</text><text x="382" y="976">07:00</text><text x="449" y="976">10:00</text><text x="518" y="976">13:00</text><text x="586" y="976">16:00</text><text x="653" y="976">19:00</text><text x="722" y="976">22:00</text>
<text x="858" y="976">04:00</text><text x="927" y="976">07:00</text><text x="994" y="976">10:00</text><text x="1063" y="976">13:00</text><text x="1131" y="976">16:00</text><text x="1198" y="976">19:00</text><text x="1267" y="976">22:00</text>
<text x="1402" y="976">04:00</text><text x="1471" y="976">07:00</text><text x="1539" y="976">10:00</text><text x="1608" y="976">13:00</text><text x="1675" y="976">16:00</text><text x="1743" y="976">19:00</text>
<text x="223" y="976" style="font-size:18px;font-weight:bold;fill:#222">21</text><text x="767" y="976" style="font-size:18px;font-weight:bold;fill:#222">22</text><text x="1312" y="976" style="font-size:18px;font-weight:bold;fill:#222">23</text><text x="1812" y="976" style="font-size:18px;font-weight:bold;fill:#222">26</text>
</g>

<!-- right strip -->
<rect x="1907" y="119" width="6" height="864" fill="#4a86e2"/>

<!-- BOTTOM BAR -->
<rect x="0" y="982" width="1913" height="1.500" fill="#9aa7ae"/>
<rect x="0" y="983.500" width="1913" height="41.500" fill="url(#gTool)"/>
<rect x="1" y="992" width="100" height="33" rx="5" fill="#2f90e2" stroke="#2a7ecb"/>
<circle cx="10" cy="1008" r="3.500" fill="#fff"/><circle cx="24" cy="1000" r="3.500" fill="#fff"/><circle cx="24" cy="1016" r="3.500" fill="#fff"/><path d="M10 1008 24 1000M10 1008 24 1016" stroke="#fff" stroke-width="1.800"/>
<text x="36" y="1014" textLength="60" lengthAdjust="spacingAndGlyphs" style="fill:#dff0fb">Partager</text>
<rect x="109" y="996" width="12" height="11" rx="5" fill="none" stroke="#111" stroke-width="2.200"/><rect x="109" y="1009" width="12" height="11" rx="5" fill="none" stroke="#111" stroke-width="2.200"/><rect x="113" y="1003" width="4" height="9" fill="none" stroke="#111" stroke-width="1.500"/>
<line x1="129" y1="1001" x2="129" y2="1018" stroke="#a33"/><rect x="125.500" y="1005" width="7" height="9" fill="#ef7070" stroke="#a33"/>
<line x1="138" y1="993" x2="138" y2="1015" stroke="#1a901a"/><rect x="134.500" y="998" width="7" height="13" fill="#3cd83c" stroke="#1a901a"/>
<path d="M128 1017H140L134 1022Z" fill="#111"/>
<rect x="156.500" y="998" width="19" height="23" fill="#fff" stroke="#111" stroke-width="1.800"/><path d="M158 1003 173 1009M158 1008 169 1014M160 1002H172M162 1014 173 1018" stroke="#111" stroke-width="2"/><path d="M167 999H175V1005Z" fill="#e05050"/><path d="M158 1020H165L158 1013Z" fill="#35b035"/>
<g><rect x="197" y="1000" width="10" height="5" fill="#39a839"/><rect x="207" y="1000" width="9" height="5" fill="#ef8080"/><rect x="197" y="1007" width="14" height="5" fill="#ef8080"/><rect x="211" y="1007" width="9" height="5" fill="#39a839"/><rect x="197" y="1014" width="7" height="5" fill="#ef8080"/><rect x="204" y="1014" width="13" height="5" fill="#39a839"/><line x1="207" y1="996" x2="207" y2="1022" stroke="#277"/></g>
<rect x="233.500" y="998.500" width="1502" height="22" rx="4" fill="#9bb9c5" stroke="#7f99a5"/>
<rect x="233.500" y="998.500" width="21" height="22" rx="4" fill="url(#gThumb)" stroke="#7f99a5"/><path d="M247 1005V1014L241 1009.500Z" fill="#111"/>
<rect x="551.500" y="998.500" width="211" height="22" rx="4" fill="url(#gThumb)" stroke="#7f99a5"/><path d="M652 1005h9M652 1008h9M652 1011h9" stroke="#7f99a5"/>
<rect x="1715.500" y="998.500" width="20" height="22" rx="4" fill="url(#gThumb)" stroke="#7f99a5"/><path d="M1723 1005V1014L1729 1009.500Z" fill="#111"/>
<rect x="1760" y="995" width="10" height="25" fill="#35c035" stroke="#117011"/><line x1="1765" y1="990" x2="1765" y2="1023" stroke="#117011"/>
<rect x="1748" y="1008" width="9" height="12" fill="#ef7f7f" stroke="#a33"/>
<path d="M1750 1020 1762 1006C1759 999 1765 994 1771 996L1767 1000 1769 1003 1773 1000C1774 1006 1769 1010 1765 1009L1754 1022Z" fill="#fff" stroke="#333"/>
<circle cx="1799" cy="1005" r="8" fill="#d0d0d0" stroke="#333" stroke-width="2"/><line x1="1805" y1="1011" x2="1814" y2="1021" stroke="#111" stroke-width="3.500"/>
<path d="M1811 992V1012M1808 996 1811 991 1814 996M1808 1008 1811 1013 1814 1008M1788 1019H1803M1792 1016 1787 1019 1792 1022M1799 1016 1804 1019 1799 1022" stroke="#1414f0" stroke-width="1.800" fill="none"/>
<circle cx="1842" cy="1005" r="8" fill="#f2f5f8" stroke="#222" stroke-width="2.200"/><rect x="1837" y="1003.500" width="10" height="3" fill="#1414f0"/><line x1="1848" y1="1011" x2="1856" y2="1020" stroke="#111" stroke-width="3.500"/>
<circle cx="1883" cy="1005" r="8" fill="#f2f5f8" stroke="#222" stroke-width="2.200"/><path d="M1878 1005h10M1883 1000v10" stroke="#1414f0" stroke-width="3"/><line x1="1889" y1="1011" x2="1897" y2="1020" stroke="#111" stroke-width="3.500"/>

<!-- RED ANNOTATION -->
<rect x="849.500" y="417" width="469.500" height="476.500" fill="none" stroke="#ee1c25" stroke-width="8.500"/>
</svg>
</body></html>
